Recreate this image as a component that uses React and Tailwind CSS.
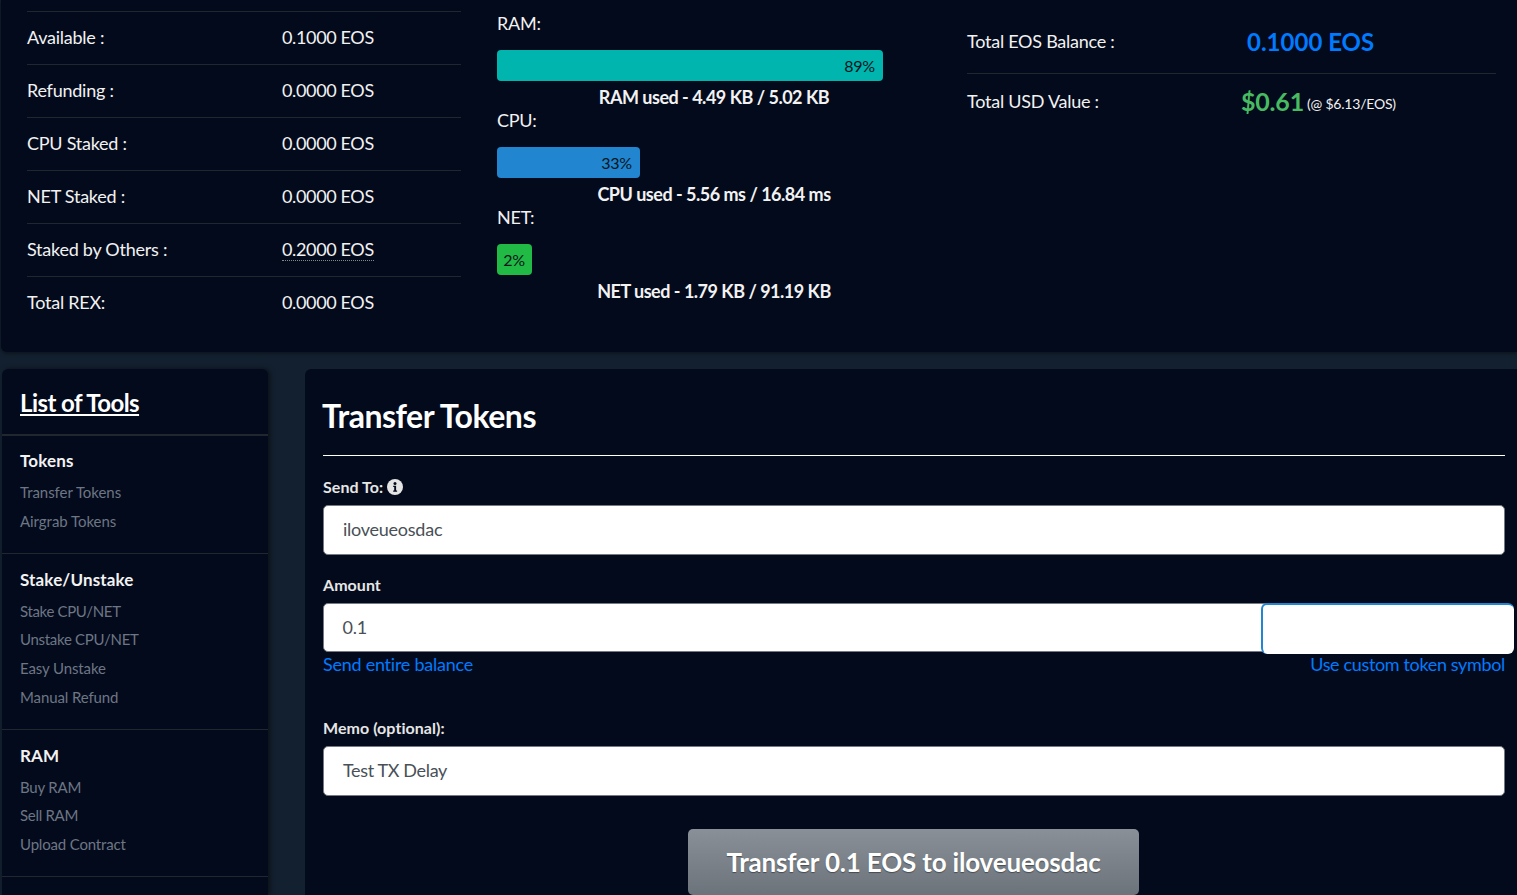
import React from "react";

const rows = [
  ["Available :", "0.1000 EOS"],
  ["Refunding :", "0.0000 EOS"],
  ["CPU Staked :", "0.0000 EOS"],
  ["NET Staked :", "0.0000 EOS"],
  ["Staked by Others :", "0.2000 EOS", true],
  ["Total REX:", "0.0000 EOS"],
];

const bars = [
  { label: "RAM:", pct: "89%", cls: "w-[386px] bg-[#00b5ad] pr-[8px]", used: "RAM used - 4.49 KB / 5.02 KB" },
  { label: "CPU:", pct: "33%", cls: "w-[143px] bg-[#2185d0] pr-[8px]", used: "CPU used - 5.56 ms / 16.84 ms" },
  { label: "NET:", pct: "2%", cls: "w-[35px] bg-[#21ba45] pr-[7px]", used: "NET used - 1.79 KB / 91.19 KB" },
];

const tools = [
  {
    h: "Tokens",
    items: [["Transfer Tokens", "tracking-[-0.05px]"], ["Airgrab Tokens", "tracking-[-0.05px]"]],
    cls: "h-[118px] pt-[14px]",
    list: "mt-[6px]",
  },
  {
    h: "Stake/Unstake",
    items: [
      ["Stake CPU/NET", "tracking-[-0.35px]"],
      ["Unstake CPU/NET", "tracking-[-0.3px]"],
      ["Easy Unstake", "tracking-[-0.12px]"],
      ["Manual Refund", "tracking-[-0.12px]"],
    ],
    cls: "h-[176px] pt-[15px]",
    list: "mt-[5.7px]",
  },
  {
    h: "RAM",
    items: [["Buy RAM", "tracking-[-0.2px]"], ["Sell RAM", "tracking-[-0.3px]"], ["Upload Contract", "tracking-[-0.18px]"]],
    cls: "h-[147px] pt-[15px]",
    list: "mt-[5.7px]",
  },
];

function Info() {
  return (
    <svg viewBox="0 0 16 16" className="w-4 h-4 inline-block" aria-hidden="true">
      <circle cx="8" cy="8" r="8" fill="#e4e4e4" />
      <circle cx="8" cy="4.4" r="1.5" fill="#030a1c" />
      <path d="M6.2 6.8h2.9v4.7h1v1.3H6.2v-1.3h1v-3.4h-1z" fill="#030a1c" />
    </svg>
  );
}

export default function App() {
  return (
    <div className="w-[1517px] h-[895px] overflow-hidden bg-[#13202f] text-white font-['Lato','Liberation_Sans',sans-serif] tracking-[-0.25px]">
      <section className="h-[352px] ml-px bg-[#030a1c] rounded-bl-md shadow-[0_1px_4px_rgba(0,0,0,0.5)] flex">
        <div className="w-[434px] ml-[26px] pt-[11px] shrink-0">
          {rows.map(([k, v, dotted]) => (
            <div key={k} className="h-[53px] pb-[2px] border-t border-[#22262f] flex items-center text-[18px] text-[#f2f2f2]">
              <span className="w-[255px]">{k}</span>
              <span className={dotted ? "border-b border-dotted border-[#888] leading-[22px] mt-px tracking-[-0.35px]" : "tracking-[-0.35px]"}>{v}</span>
            </div>
          ))}
        </div>
        <div className="w-[386px] ml-[36px] shrink-0 pt-[11px] text-[18px] text-[#f2f2f2]">
          {bars.map((b) => (
            <div key={b.label} className="h-[97px]">
              <div className="h-[25px] leading-[25px]">{b.label}</div>
              <div className={`mt-[14px] h-[31px] rounded-[4px] flex items-center justify-end text-[16px] tracking-[-0.2px] text-[#06161c] ${b.cls}`}>
                {b.pct}
              </div>
              <div className="mt-[4px] h-[23px] leading-[25px] text-center font-bold tracking-[-0.5px] whitespace-nowrap pl-[48px]">{b.used}</div>
            </div>
          ))}
        </div>
        <div className="w-[529px] ml-[84px] shrink-0 pt-[11px] text-[18px] text-[#f2f2f2]">
          <div className="h-[63px] pb-[2px] border-b border-[#22262f] flex items-center">
            <span className="w-[279px]">Total EOS Balance :</span>
            <span className="ml-px mt-[2px] text-[24px] font-bold text-[#007bff] tracking-normal">0.1000 EOS</span>
          </div>
          <div className="h-[55px] flex items-center">
            <span className="w-[274px]">Total USD Value :</span>
            <span className="text-[25px] font-bold text-[#48bb62] tracking-[-0.2px]">$0.61</span>
            <span className="ml-[3px] mt-[4px] text-[14px] tracking-[-0.2px]">(@ $6.13/EOS)</span>
          </div>
        </div>
      </section>

      <div className="flex mt-[17px] items-start">
        <aside className="w-[266px] h-[526px] ml-[2px] shrink-0 bg-[#030a1c] rounded-t-md shadow-[2px_0_5px_rgba(0,0,0,0.5)] overflow-hidden">
          <div className="h-[67px] border-b-2 border-[#22262f] pl-[18px] pt-[19px]">
            <span className="block w-fit text-[24px] leading-[30px] font-bold underline decoration-2 underline-offset-2 [text-decoration-skip-ink:none] tracking-[-0.55px]">List of Tools</span>
          </div>
          {tools.map((g) => (
            <div key={g.h} className={`border-b border-[#22262f] pl-[18px] ${g.cls}`}>
              <div className="text-[17px] font-bold leading-[22px] tracking-[0.15px] text-[#f2f2f2]">{g.h}</div>
              <ul className={g.list}>
                {g.items.map(([t, c]) => (
                  <li key={t} className={`h-[28.7px] leading-[28.7px] text-[15px] text-[#6d7684] ${c}`}>{t}</li>
                ))}
              </ul>
            </div>
          ))}
        </aside>

        <main className="ml-[37px] w-[1212px] h-[526px] shrink-0 bg-[#030a1c] rounded-tl-md pl-[18px] pr-[12px]">
          <h1 className="h-[87px] pt-[27px] border-b border-white text-[32px] leading-[40px] font-bold tracking-[-0.5px] indent-[-1px]">Transfer Tokens</h1>
          <label className="mt-[21px] h-[21px] pb-[2px] flex items-center gap-1 text-[16px] font-bold tracking-[0.05px] text-[#e6e6e6]">Send To: <Info /></label>
          <div className="mt-[7px] h-[50px] pb-[2px] bg-white border border-[#737a83] rounded-[5px] pl-[19px] flex items-center text-[18px] tracking-[-0.25px] text-[#495057]">iloveueosdac</div>
          <label className="mt-[20px] h-[21px] pb-[2px] flex items-center text-[16px] font-bold tracking-[0.05px] text-[#e6e6e6]">Amount</label>
          <div className="relative mt-[7px] h-[49px] bg-white border border-[#737a83] rounded-[5px] pl-[18.5px] flex items-center text-[18px] tracking-[-0.25px] text-[#495057]">
            0.1
            <div className="absolute left-[937px] top-[-1px] w-[253px] h-[51px] bg-white border-l-2 border-t-2 border-[#2185d0] rounded-[6px]" />
          </div>
          <div className="mt-[1px] h-[25px] pb-[2px] flex justify-between items-center text-[18px] text-[#007bff] tracking-[-0.25px]">
            <span>Send entire balance</span>
            <span className="tracking-[-0.35px]">Use custom token symbol</span>
          </div>
          <label className="mt-[40px] h-[21px] pb-[2px] flex items-center text-[16px] font-bold tracking-[0.05px] text-[#e6e6e6]">Memo (optional):</label>
          <div className="mt-[7px] h-[50px] pb-[2px] bg-white border border-[#737a83] rounded-[5px] pl-[19px] flex items-center text-[18px] tracking-[-0.35px] text-[#495057]">Test TX Delay</div>
          <div className="mt-[33px] flex justify-center pr-px">
            <button className="w-[451px] h-[66px] rounded-[5px] bg-gradient-to-b from-[#8a9097] to-[#6c737b] text-[26px] font-bold text-white tracking-[-0.18px] [text-shadow:0_1px_1px_rgba(0,0,0,0.4)]">
              Transfer 0.1 EOS to iloveueosdac
            </button>
          </div>
        </main>
      </div>
    </div>
  );
}
